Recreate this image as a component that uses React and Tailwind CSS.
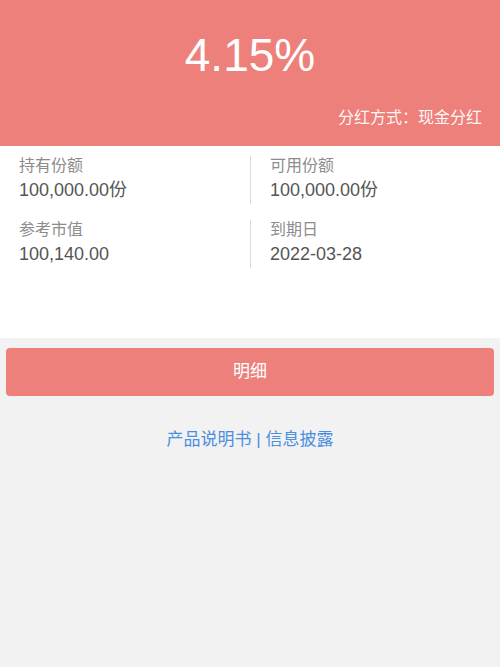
export default function App() {
  const font = { fontFamily: '"Liberation Sans", "Noto Sans CJK SC", sans-serif' };

  const cells = [
    { label: '持有份额', value: '100,000.00份' },
    { label: '可用份额', value: '100,000.00份' },
    { label: '参考市值', value: '100,140.00' },
    { label: '到期日', value: '2022-03-28' },
  ];

  return (
    <div className="min-h-[667px] w-[500px] bg-[#f2f2f2]" style={font}>
      {/* Header */}
      <div className="bg-[#ee807c] pt-[32px] pb-[19px] px-[18px] text-white">
        <div className="text-center text-[46px] leading-none h-[46px]">4.15%</div>
        <div className="mt-[31px] text-right text-[16px] leading-[18px] text-white/95">
          分红方式：现金分红
        </div>
      </div>

      {/* Holdings */}
      <div className="bg-white h-[192px] pt-[10px]">
        <div className="grid grid-cols-2 gap-y-[16px]">
          {cells.map((c, i) => (
            <div
              key={c.label}
              className={`h-[48px] ${i % 2 === 1 ? 'border-l border-[#dadada] pl-[19px]' : 'pl-[19px]'}`}
            >
              <div className="pt-[1px] text-[16px] leading-[18px] text-[#8c8c8c]">{c.label}</div>
              <div className="mt-[5px] text-[18px] leading-[21px] text-[#555555]">{c.value}</div>
            </div>
          ))}
        </div>
      </div>

      {/* Action */}
      <div className="px-[6px] pt-[10px]">
        <button className="w-full h-[48px] rounded-[4px] bg-[#ee807c] text-white text-[17px]">
          明细
        </button>
      </div>

      <div className="mt-[34px] text-center text-[17px] leading-[20px] text-[#4a8fe0]">
        产品说明书 | 信息披露
      </div>
    </div>
  );
}
